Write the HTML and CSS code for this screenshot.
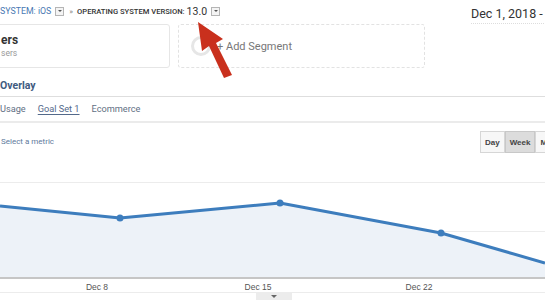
FILE: index.html
```html
<!DOCTYPE html>
<html lang="en">
<head>
	<meta charset="UTF-8">
	<title>Audience Overview</title>
	<link rel="stylesheet" href="styles.css">
</head>
<body>
	<div class="page">
		<div class="topBar">
			<div class="crumbs">
				<span class="crumbLink">SYSTEM: iOS</span>
				<span class="pick"></span>
				<span class="sep">&raquo;</span>
				<span class="crumbLabel">OPERATING SYSTEM VERSION:</span>
				<span class="crumbValue">13.0</span>
				<span class="pick"></span>
			</div>
			<div class="dateRange">Dec 1, 2018 - Dec 31, 2018</div>
		</div>

		<div class="segments">
			<div class="segment">
				<div class="segName">ers</div>
				<div class="segSub">sers</div>
			</div>
			<div class="segment addSegment">
				<span class="ring"></span>
				<span>+ Add Segment</span>
			</div>
		</div>

		<div class="overlay">Overlay</div>

		<div class="tabs">
			<span>Usage</span>
			<span class="current">Goal Set 1</span>
			<span>Ecommerce</span>
		</div>

		<div class="metricRow">
			<span class="metric">Select a metric</span>
			<div class="periods">
				<span>Day</span>
				<span class="on">Week</span>
				<span>Month</span>
			</div>
		</div>

		<svg class="chart" width="545" height="140" viewBox="0 0 545 140">
			<line x1="0" y1="21.5" x2="545" y2="21.5" stroke="#ececec"/>
			<line x1="0" y1="70.5" x2="545" y2="70.5" stroke="#ececec"/>
			<polygon points="0,45 120,57 280,42 441,72 545,102 545,117 0,117" fill="#edf2f8"/>
			<polyline points="0,45 120,57 280,42 441,72 545,102" fill="none" stroke="#3d7dbd" stroke-width="3" stroke-linejoin="round"/>
			<circle cx="120" cy="57" r="3.5" fill="#3d7dbd"/>
			<circle cx="280" cy="42" r="3.5" fill="#3d7dbd"/>
			<circle cx="441" cy="72" r="3.5" fill="#3d7dbd"/>
			<rect x="0" y="116" width="545" height="2" fill="#c6c6c6"/>
			<text x="97" y="129" class="tick">Dec 8</text>
			<text x="258" y="129" class="tick">Dec 15</text>
			<text x="419" y="129" class="tick">Dec 22</text>
			<line x1="0" y1="131.5" x2="545" y2="131.5" stroke="#ececec"/>
			<rect x="256" y="132" width="36" height="8" fill="#ececec"/>
			<polygon points="271,134 277,134 274,137" fill="#666"/>
		</svg>

		<svg class="arrow" width="60" height="70" viewBox="0 0 60 70">
			<polygon points="18,2 43,19 36,23 52,55 44,58 29,26 22,31" fill="#c9301d"/>
		</svg>
	</div>
</body>
</html>
```

FILE: styles.css
```css
body {
	margin: 0px;
	font-family: Roboto, "Liberation Sans", sans-serif;
	color: #333;
	background: #fff;
}
.page {
	position: relative;
	width: 545px;
	height: 300px;
	overflow: hidden;
}
.topBar {
	display: grid;
	grid-template-columns: 471px 1fr;
	height: 24px;
	white-space: nowrap;
}
.crumbs {
	display: flex;
	align-items: center;
	height: 22px;
}
.crumbLink {
	font-size: 8.8px;
	color: #4a79b3;
}
.pick {
	position: relative;
	width: 7px;
	height: 7px;
	margin-left: 4px;
	border: 1px solid #b5b5b5;
	background: #f4f4f4;
}
.pick::after {
	content: "";
	position: absolute;
	left: 1.5px;
	top: 2.5px;
	border-left: 2px solid transparent;
	border-right: 2px solid transparent;
	border-top: 2px solid #555;
}
.sep {
	margin: 0px 4px 0px 5px;
	font-size: 8px;
	color: #888;
}
.crumbLabel {
	font-size: 7.6px;
	font-weight: 500;
	color: #333;
}
.crumbValue {
	margin-left: 2px;
	font-size: 10.5px;
	color: #333;
}
.dateRange {
	height: 24px;
	line-height: 28px;
	font-size: 12.5px;
	color: #333;
	border-bottom: 1px dotted #ddd;
	box-sizing: border-box;
}
.segments {
	display: flex;
	gap: 8px;
	height: 44px;
}
.segment {
	box-sizing: border-box;
	height: 44px;
	border: 1px solid #e6e6e6;
	border-radius: 3px;
}
.segment:first-child {
	width: 190px;
	margin-left: -20px;
	padding: 8px 0px 0px 20px;
}
.segName {
	font-size: 12px;
	font-weight: bold;
	color: #333;
}
.segSub {
	margin-top: 1px;
	font-size: 8.5px;
	color: #999;
}
.addSegment {
	display: flex;
	align-items: center;
	width: 247px;
	padding-left: 12px;
	border: 1px dashed #e2e2e2;
	font-size: 11px;
	color: #777;
}
.ring {
	width: 14px;
	height: 14px;
	margin-right: 6px;
	border: 3px solid #e6e6e6;
	border-radius: 50%;
}
.overlay {
	height: 28px;
	line-height: 36px;
	font-size: 10.5px;
	font-weight: bold;
	color: #3f5b80;
	border-bottom: 1px solid #dedede;
}
.tabs {
	display: flex;
	gap: 12px;
	height: 24px;
	line-height: 24px;
	font-size: 9.2px;
	color: #5f6f84;
	border-bottom: 2px solid #ebebeb;
}
.tabs .current {
	text-decoration: underline;
	text-underline-offset: 2px;
	color: #53698a;
}
.metricRow {
	display: flex;
	justify-content: space-between;
	height: 38px;
}
.metric {
	margin: 14px 0px 0px 1px;
	font-size: 8px;
	color: #5e7a9c;
}
.periods {
	display: flex;
	margin-top: 8px;
	height: 22px;
	width: 65px;
	overflow: hidden;
}
.periods span {
	box-sizing: border-box;
	height: 22px;
	line-height: 21px;
	padding: 0px 4px;
	border: 1px solid #d6d6d6;
	background: #f7f7f7;
	font-family: "Liberation Sans", Arial, sans-serif;
	font-size: 8px;
	font-weight: bold;
	color: #444;
}
.periods span.on {
	background: #dcdcdc;
	border-color: #c8c8c8;
}
.chart {
	display: block;
}
.tick {
	font-family: "Liberation Sans", Arial, sans-serif;
	font-size: 8.5px;
	fill: #555;
	text-anchor: middle;
}
.arrow {
	position: absolute;
	left: 180px;
	top: 20px;
}
```
